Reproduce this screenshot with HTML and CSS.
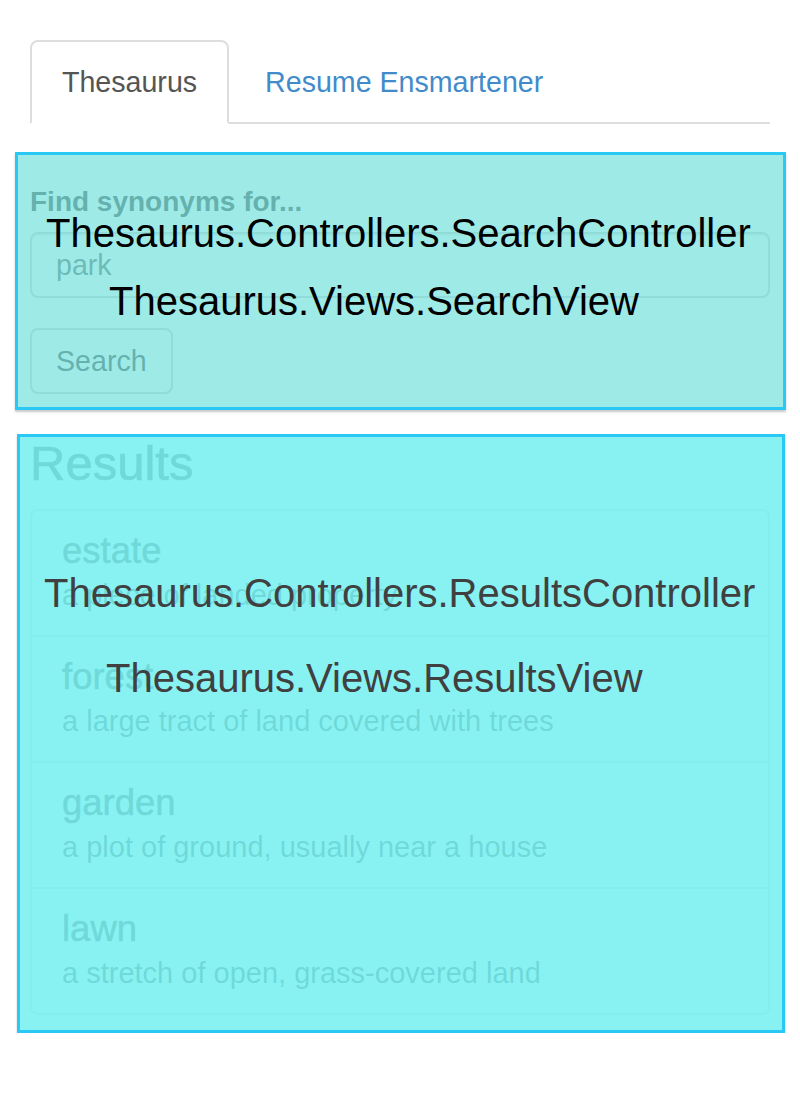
FILE: index.html
```html
<!DOCTYPE html>
<html lang="en">
<head>
<meta charset="utf-8">
<title>Thesaurus</title>
<link rel="stylesheet" href="styles.css">
</head>
<body>
<div class="page">
  <ul class="tabs">
    <li class="tab active"><a href="#">Thesaurus</a></li>
    <li class="tab"><a href="#">Resume Ensmartener</a></li>
  </ul>

  <section class="view view-search">
    <form class="search-form">
      <div class="form-group">
        <label class="field-label" for="q">Find synonyms for...</label>
        <input class="field-input" id="q" type="text" value="park">
      </div>
      <button class="btn" type="button">Search</button>
    </form>
    <div class="overlay overlay-search">
      <span class="overlay-label label-controller">Thesaurus.Controllers.SearchController</span>
      <span class="overlay-label label-view">Thesaurus.Views.SearchView</span>
    </div>
  </section>

  <section class="view view-results">
    <h3 class="results-title">Results</h3>
    <div class="list-group">
      <div class="list-item">
        <h4 class="item-heading">estate</h4>
        <p class="item-text">a piece of landed property</p>
      </div>
      <div class="list-item">
        <h4 class="item-heading">forest</h4>
        <p class="item-text">a large tract of land covered with trees</p>
      </div>
      <div class="list-item">
        <h4 class="item-heading">garden</h4>
        <p class="item-text">a plot of ground, usually near a house</p>
      </div>
      <div class="list-item">
        <h4 class="item-heading">lawn</h4>
        <p class="item-text">a stretch of open, grass-covered land</p>
      </div>
    </div>
    <div class="overlay overlay-results">
      <span class="overlay-label label-controller">Thesaurus.Controllers.ResultsController</span>
      <span class="overlay-label label-view">Thesaurus.Views.ResultsView</span>
    </div>
  </section>
</div>
</body>
</html>
```

FILE: styles.css
```css
* {
  box-sizing: border-box;
}

html, body {
  margin: 0;
  padding: 0;
  background: #ffffff;
}

body {
  font-family: "Liberation Sans", Arial, Helvetica, sans-serif;
  font-size: 28px;
  line-height: 40px;
  color: #333333;
}

.page {
  width: 800px;
  padding: 40px 30px 0 30px;
}

/* Tabs */
.tabs {
  list-style: none;
  margin: 0;
  padding: 0;
  display: flex;
  border-bottom: 2px solid #dddddd;
}

.tab {
  margin-right: 4px;
  margin-bottom: -2px;
}

.tab a {
  display: block;
  padding: 20px 30px;
  line-height: 40px;
  font-size: 28.6px;
  color: #428bca;
  text-decoration: none;
  border: 2px solid transparent;
  border-radius: 8px 8px 0 0;
}

.tab.active a {
  color: #555555;
  background: #ffffff;
  border-color: #dddddd;
  border-bottom-color: transparent;
}

/* Views with debug overlays */
.view {
  position: relative;
}

.view-search {
  margin: 28px -16px 0 -15px;
  padding: 30px 16px 16px 15px;
}

.view-results {
  margin: 24px -15px 0 -13px;
  padding: 3px 15px 18px 13px;
}

.overlay {
  position: absolute;
  top: 0;
  left: 0;
  right: 0;
  bottom: 0;
  border: 3px solid #2ac8f4;
  box-shadow: 0 2px 2px rgba(0, 0, 0, 0.22);
  pointer-events: none;
}

.overlay-search {
  background: rgba(120, 226, 222, 0.72);
}

.overlay-results {
  background: rgba(120, 240, 240, 0.88);
}

.overlay-label {
  position: absolute;
  white-space: nowrap;
  font-family: "Liberation Sans", Arial, Helvetica, sans-serif;
  font-size: 40px;
  line-height: 40px;
}

.overlay-search .overlay-label {
  color: #000000;
}

.overlay-results .overlay-label {
  color: #404040;
}

.overlay-search .label-controller {
  left: 28px;
  top: 58px;
}

.overlay-search .label-view {
  left: 91px;
  top: 126px;
}

.overlay-results .label-controller {
  left: 24px;
  top: 136px;
}

.overlay-results .label-view {
  left: 86px;
  top: 221px;
}

/* Search form */
.search-form {
  margin: 0;
}

.form-group {
  margin-bottom: 30px;
}

.field-label {
  display: inline-block;
  font-weight: bold;
  font-size: 28px;
  line-height: 40px;
  margin-bottom: 10px;
}

.field-input {
  display: block;
  width: 100%;
  height: 66px;
  padding: 0 24px;
  font-family: inherit;
  font-size: 28.6px;
  color: #555555;
  background: #ffffff;
  border: 2px solid #cccccc;
  border-radius: 8px;
  box-shadow: inset 0 2px 2px rgba(0, 0, 0, 0.075);
}

.btn {
  display: inline-block;
  height: 66px;
  padding: 0 24px;
  font-family: inherit;
  font-size: 28.6px;
  color: #333333;
  background: #ffffff;
  border: 2px solid #cccccc;
  border-radius: 8px;
}

/* Results */
.results-title {
  margin: 0 0 19px 0;
  font-size: 49px;
  line-height: 53px;
  font-weight: normal;
  -webkit-text-stroke: 0.7px #333333;
}

.list-group {
  display: flex;
  flex-direction: column;
}

.list-item {
  padding: 20px 30px;
  border: 2px solid #dddddd;
  margin-bottom: -2px;
  background: #ffffff;
}

.list-item:first-child {
  border-radius: 8px 8px 0 0;
}

.list-item:last-child {
  margin-bottom: 0;
  border-radius: 0 0 8px 8px;
}

.item-heading {
  margin: 0 0 5px 0;
  font-size: 36.5px;
  line-height: 39px;
  font-weight: normal;
  -webkit-text-stroke: 0.6px #333333;
}

.item-text {
  margin: 0;
  font-size: 29px;
  line-height: 40px;
}
```
